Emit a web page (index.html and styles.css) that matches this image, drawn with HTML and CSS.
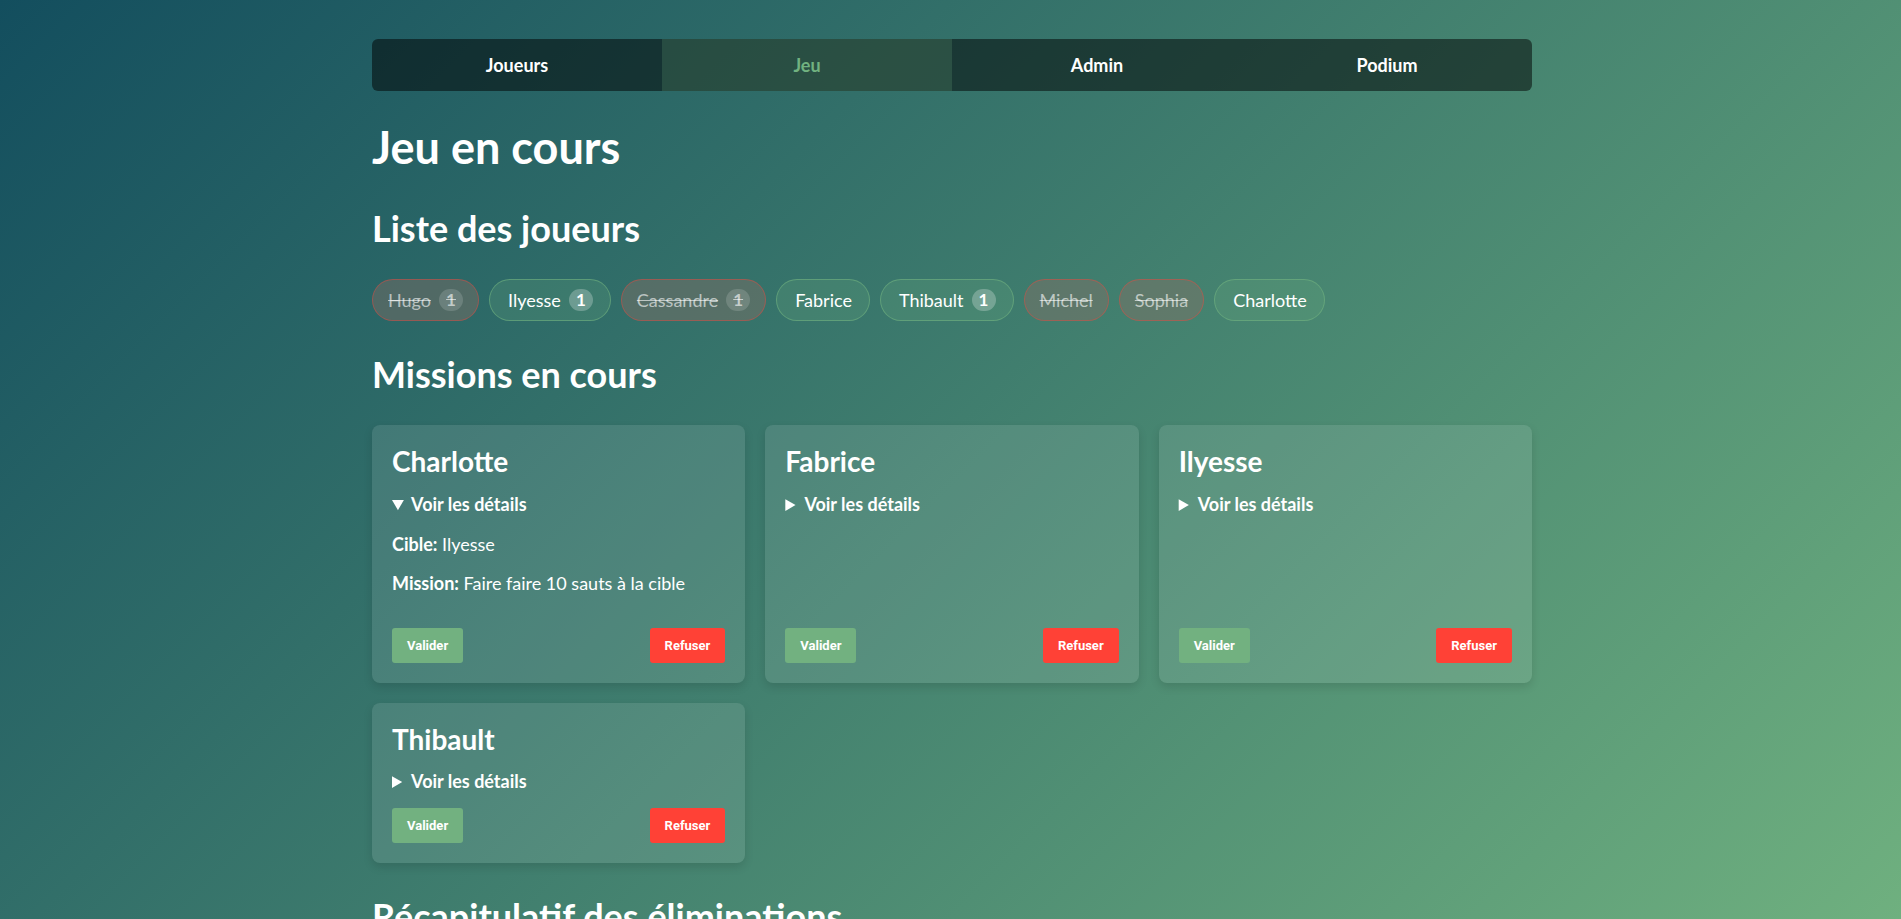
FILE: index.html
```html
<!DOCTYPE html>
<html lang="fr">
<head>
<meta charset="utf-8">
<title>Jeu en cours</title>
<link rel="stylesheet" href="styles.css">
</head>
<body>
<div class="container">
  <nav class="tabs">
    <a class="tab">Joueurs</a>
    <a class="tab active">Jeu</a>
    <a class="tab">Admin</a>
    <a class="tab">Podium</a>
  </nav>

  <h1 class="title">Jeu en cours</h1>

  <h2 class="section">Liste des joueurs</h2>
  <div class="chips">
    <span class="chip dead">Hugo <span class="badge">1</span></span>
    <span class="chip">Ilyesse <span class="badge">1</span></span>
    <span class="chip dead">Cassandre <span class="badge">1</span></span>
    <span class="chip">Fabrice</span>
    <span class="chip">Thibault <span class="badge">1</span></span>
    <span class="chip dead">Michel</span>
    <span class="chip dead">Sophia</span>
    <span class="chip">Charlotte</span>
  </div>

  <h2 class="section">Missions en cours</h2>
  <div class="missions">
    <div class="card">
      <h3 class="card-title">Charlotte</h3>
      <details open>
        <summary>Voir les détails</summary>
        <p><strong>Cible:</strong> Ilyesse</p>
        <p><strong>Mission:</strong> Faire faire 10 sauts à la cible</p>
      </details>
      <div class="actions">
        <button class="btn ok">Valider</button>
        <button class="btn ko">Refuser</button>
      </div>
    </div>
    <div class="card">
      <h3 class="card-title">Fabrice</h3>
      <details>
        <summary>Voir les détails</summary>
        <p><strong>Cible:</strong> Thibault</p>
        <p><strong>Mission:</strong> Mission secrète</p>
      </details>
      <div class="actions">
        <button class="btn ok">Valider</button>
        <button class="btn ko">Refuser</button>
      </div>
    </div>
    <div class="card">
      <h3 class="card-title">Ilyesse</h3>
      <details>
        <summary>Voir les détails</summary>
        <p><strong>Cible:</strong> Fabrice</p>
        <p><strong>Mission:</strong> Mission secrète</p>
      </details>
      <div class="actions">
        <button class="btn ok">Valider</button>
        <button class="btn ko">Refuser</button>
      </div>
    </div>
    <div class="card">
      <h3 class="card-title">Thibault</h3>
      <details>
        <summary>Voir les détails</summary>
        <p><strong>Cible:</strong> Charlotte</p>
        <p><strong>Mission:</strong> Mission secrète</p>
      </details>
      <div class="actions">
        <button class="btn ok">Valider</button>
        <button class="btn ko">Refuser</button>
      </div>
    </div>
  </div>

  <h2 class="section">Récapitulatif des éliminations</h2>
  <ul class="recap">
    <li>Hugo éliminé par Ilyesse</li>
    <li>Cassandre éliminée par Thibault</li>
  </ul>
</div>
</body>
</html>
```

FILE: styles.css
```css
html {
  scrollbar-width: none;
}
html::-webkit-scrollbar {
  display: none;
}
body {
  margin: 0;
  min-height: 100vh;
  font-family: Lato, "Noto Sans", sans-serif;
  font-size: 18px;
  color: #ffffff;
  background: linear-gradient(135deg, #134e5e 0%, #6fb07f 100%) fixed;
}
.container {
  max-width: 1160px;
  margin: 0 auto;
  padding-top: 39px;
  padding-left: 3px;
}
.tabs {
  display: grid;
  grid-template-columns: repeat(4, 1fr);
  height: 52px;
  border-radius: 6px;
  overflow: hidden;
  background: rgba(0, 0, 0, 0.5);
}
.tab {
  display: flex;
  align-items: center;
  justify-content: center;
  font-weight: 700;
  font-size: 18px;
  color: #ffffff;
}
.tab.active {
  background: rgba(113, 178, 128, 0.2);
  color: #71b280;
}
.title {
  font-size: 45px;
  font-weight: 700;
  line-height: 1.2;
  margin: 29px 0 33px;
}
.section {
  font-size: 36px;
  font-weight: 700;
  line-height: 1.2;
  margin: 32px 0 29px;
}
.chips {
  display: flex;
  flex-wrap: wrap;
  gap: 10px;
}
.chip {
  display: inline-flex;
  align-items: center;
  gap: 8px;
  height: 42px;
  box-sizing: border-box;
  padding: 0 17px 0 18px;
  border-radius: 21px;
  border: 1px solid rgba(113, 178, 128, 0.6);
  background: rgba(113, 178, 128, 0.2);
  font-size: 18px;
  line-height: 22px;
  color: #ffffff;
}
.chip.dead {
  padding: 0 15px;
  border-color: rgba(255, 65, 54, 0.4);
  background: rgba(140, 110, 100, 0.4);
  color: rgba(255, 255, 255, 0.6);
  text-decoration: line-through;
}
.badge {
  display: inline-flex;
  align-items: center;
  justify-content: center;
  min-width: 24px;
  height: 22px;
  box-sizing: border-box;
  padding: 0 6px;
  border-radius: 11px;
  background: rgba(255, 255, 255, 0.25);
  font-weight: 700;
  font-size: 17px;
}
.chip.dead .badge {
  background: rgba(255, 255, 255, 0.15);
}
.missions {
  display: grid;
  grid-template-columns: repeat(3, 1fr);
  gap: 20px;
}
.card {
  display: flex;
  flex-direction: column;
  padding: 20px;
  border-radius: 8px;
  background: rgba(255, 255, 255, 0.1);
  box-shadow: 0 4px 10px rgba(0, 0, 0, 0.12);
}
.card-title {
  margin: 0 0 15px;
  font-size: 28px;
  font-weight: 700;
  line-height: 1.2;
}
summary {
  font-weight: 700;
  font-size: 18px;
  line-height: 21.6px;
  cursor: pointer;
}
details p {
  margin: 18px 0;
  line-height: 21.6px;
}
.actions {
  display: flex;
  justify-content: space-between;
  margin-top: auto;
  padding-top: 15px;
}
.btn {
  height: 35px;
  padding: 0 15px;
  border: none;
  border-radius: 3px;
  font-family: Roboto, "Liberation Sans", sans-serif;
  font-size: 13px;
  font-weight: 700;
  color: #ffffff;
  cursor: pointer;
}
.btn.ok {
  background: #72b180;
}
.btn.ko {
  background: #ff4136;
}
.recap {
  margin: 0;
  padding-left: 20px;
  line-height: 1.6;
}
```
